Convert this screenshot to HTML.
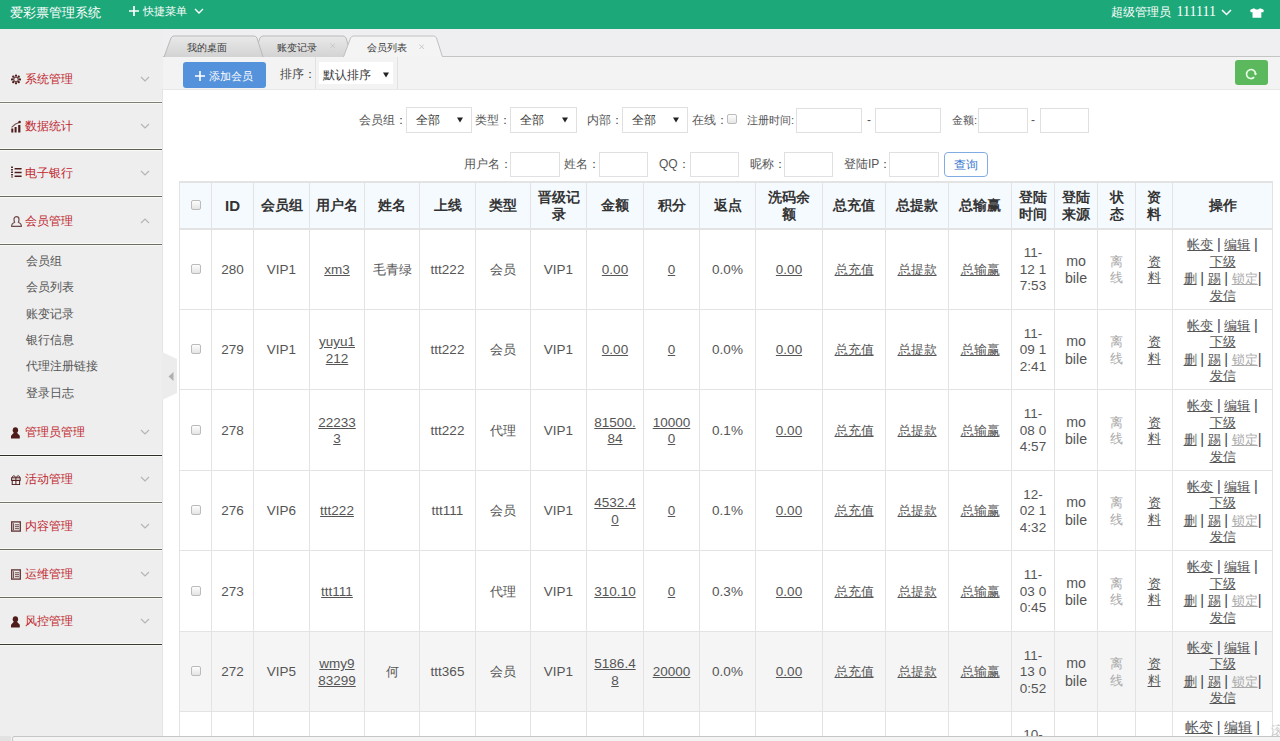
<!DOCTYPE html><html><head><meta charset="utf-8"><style>
*{margin:0;padding:0;box-sizing:border-box}
html,body{width:1280px;height:741px;overflow:hidden;background:#fff;font-family:"Liberation Sans",sans-serif;color:#555;font-size:12px}
.a{position:absolute;white-space:nowrap}
#hd{position:absolute;left:0;top:0;width:1280px;height:29px;background:#1da87a;color:#fff}
#side{position:absolute;left:0;top:29px;width:163px;height:712px;background:#eee}
.ln{position:absolute;left:0;width:163px;height:3px;border-top:1px solid #fbfbf6;border-bottom:1px solid #f9f9f4}
.mt{position:absolute;left:25px;font-size:11.6px;line-height:14px;color:#c0282e;white-space:nowrap}
.sm{position:absolute;left:26px;font-size:11.6px;line-height:14px;color:#555;white-space:nowrap}
#tabs{position:absolute;left:163px;top:29px;width:1117px;height:28px;background:#efeff1;border-bottom:1px solid #c8c8c8}
#tb{position:absolute;left:163px;top:57px;width:1117px;height:33px;background:#f5f5f5;border-bottom:1px solid #e6e6e6}
.inp{position:absolute;background:#fff;border:1px solid #e0e0e0}
.sel{position:absolute;background:#fff;border:1px solid #ddd;font-size:12px;color:#333}
.lb{position:absolute;font-size:12px;line-height:14px;color:#555;white-space:nowrap}
table{position:absolute;left:179px;top:182px;border-collapse:collapse;table-layout:fixed;font-size:13px;color:#555}
td,th{border:1px solid #e2e2e2;text-align:center;vertical-align:middle;padding:0;white-space:nowrap;overflow:hidden}
th{background:#f5fafe;color:#333;font-weight:bold;line-height:16.5px}
td{line-height:16.5px}
td u{text-decoration:underline}
.off{color:#aaa}
.cl{position:absolute;display:flex;align-items:center;justify-content:center;text-align:center;font-size:13.5px;line-height:16.5px;color:#555;white-space:nowrap;overflow:hidden}
.cl.th{color:#333;font-weight:bold}
.cb{display:inline-block;width:10px;height:10px;border:1px solid #bbb;border-radius:2px;background:linear-gradient(#fdfdfd,#e4e4e4)}
.cl u{text-decoration:underline}
.sp{color:#3a4250;font-size:14.5px}
</style></head><body>
<div id="hd">
<div class="a" style="left:10px;top:3.5px;font-size:13.3px;line-height:17px">爱彩票管理系统</div>
<svg class="a" width="10" height="10" viewBox="0 0 10 10" style="left:128.6px;top:6.2px"><path d="M5 0V10M0 5H10" stroke="#fff" stroke-width="1.7"/></svg>
<div class="a" style="left:143px;top:4.5px;font-size:11.3px;line-height:13px">快捷菜单</div>
<svg class="a" width="11" height="7" viewBox="0 0 11 7" style="left:193.5px;top:8.3px"><path d="M1 1L5 5L9 1" stroke="#fff" stroke-width="1.4" fill="none"/></svg>
<div class="a" style="left:1110.5px;top:4.5px;font-size:11.5px;line-height:14px">超级管理员</div>
<div class="a" style="left:1176.5px;top:3px;font-family:'Liberation Serif',serif;font-size:14px;line-height:17px">111111</div>
<svg class="a" width="11" height="7" viewBox="0 0 11 7" style="left:1221px;top:9px"><path d="M1 1L5.5 5.5L10 1" stroke="#fff" stroke-width="1.5" fill="none"/></svg>
<svg class="a" width="14" height="10" viewBox="0 0 14 10" style="left:1249.9px;top:7.6px"><path d="M4 0.3C5 1.2 6 1.5 7 1.5C8 1.5 9 1.2 10 0.3L13.2 1.6C13.9 2 13.9 3.2 13.3 4.2H11.3V9.8H2.5V4.2H0.7C0.1 3.2 0.1 2 0.8 1.6Z" fill="#fff"/></svg>
</div>
<div id="side"></div>
<div class="ln" style="top:101px;background:#7f7f7a"></div>
<svg class="a" width="10" height="11" viewBox="0 0 10 10.5" style="left:10.7px;top:74.1px"><circle cx="8.90" cy="5.20" r="1.15" fill="#4f1c1c"/><circle cx="7.76" cy="7.96" r="1.15" fill="#4f1c1c"/><circle cx="5.00" cy="9.10" r="1.15" fill="#4f1c1c"/><circle cx="2.24" cy="7.96" r="1.15" fill="#4f1c1c"/><circle cx="1.10" cy="5.20" r="1.15" fill="#4f1c1c"/><circle cx="2.24" cy="2.44" r="1.15" fill="#4f1c1c"/><circle cx="5.00" cy="1.30" r="1.15" fill="#4f1c1c"/><circle cx="7.76" cy="2.44" r="1.15" fill="#4f1c1c"/><circle cx="5" cy="5.2" r="2.3" fill="none" stroke="#4f1c1c" stroke-width="1.3" opacity="0.8"/></svg>
<div class="mt" style="top:71.5px">系统管理</div>
<svg class="a" width="10" height="6" viewBox="0 0 10 6" style="left:140px;top:76.0px"><path d="M1 1L5 5L9 1" stroke="#b5b5b5" stroke-width="1.2" fill="none"/></svg>
<div class="ln" style="top:148px;background:#5f5f5a"></div>
<svg class="a" width="10" height="13" viewBox="0 0 10 12.5" style="left:11.1px;top:120.3px"><path d="M0.3 12.3V8.2H2.3V12.3ZM3.6 12.3V6.8H5.6V12.3ZM7.2 12.3V4.8H9.4V12.3Z" fill="#4f1c1c"/><path d="M0.6 7.2L4.5 3.8L8.2 2.2" stroke="#4f1c1c" stroke-width="1.1" fill="none" opacity="0.75"/><circle cx="8.6" cy="1.7" r="1.3" fill="#4f1c1c"/></svg>
<div class="mt" style="top:118.5px">数据统计</div>
<svg class="a" width="10" height="6" viewBox="0 0 10 6" style="left:140px;top:123.0px"><path d="M1 1L5 5L9 1" stroke="#b5b5b5" stroke-width="1.2" fill="none"/></svg>
<div class="ln" style="top:195px;background:#6a6a65"></div>
<svg class="a" width="11" height="12" viewBox="0 0 11 12" style="left:10.6px;top:166.4px"><path d="M1 0.5V11.5" stroke="#4f1c1c" stroke-width="1.8" stroke-dasharray="1.6 0.9"/><path d="M3.6 2.8H10.6M3.6 6.5H10.6M3.6 10.2H10.6" stroke="#4f1c1c" stroke-width="1.5"/></svg>
<div class="mt" style="top:165.5px">电子银行</div>
<svg class="a" width="10" height="6" viewBox="0 0 10 6" style="left:140px;top:170.0px"><path d="M1 1L5 5L9 1" stroke="#b5b5b5" stroke-width="1.2" fill="none"/></svg>
<div class="ln" style="top:243px;background:#6e6e68"></div>
<svg class="a" width="11" height="11" viewBox="0 0 11 11" style="left:10.6px;top:215.9px"><path d="M3.6 6.2C3 4.8 3 3.6 3 3.2A2.5 2.5 0 0 1 8 3.2C8 3.6 8 4.8 7.4 6.2C9 7 10.3 7.8 10.3 9.2V10.3H0.7V9.2C0.7 7.8 2 7 3.6 6.2Z" fill="none" stroke="#6e4a4a" stroke-width="1.2"/></svg>
<div class="mt" style="top:213.5px">会员管理</div>
<svg class="a" width="10" height="6" viewBox="0 0 10 6" style="left:140px;top:218.0px"><path d="M1 5L5 1L9 5" stroke="#b5b5b5" stroke-width="1.2" fill="none"/></svg>
<div class="ln" style="top:454px;background:#2c2c2a"></div>
<svg class="a" width="9" height="12" viewBox="0 0 9 11.5" style="left:11.2px;top:427.1px"><ellipse cx="4.4" cy="3.1" rx="2.7" ry="3" fill="#4f1c1c"/><path d="M2.6 5.8H6.2L8.8 8.6V11.3H0V8.6Z" fill="#4f1c1c"/></svg>
<div class="mt" style="top:424.5px">管理员管理</div>
<svg class="a" width="10" height="6" viewBox="0 0 10 6" style="left:140px;top:429.0px"><path d="M1 1L5 5L9 1" stroke="#b5b5b5" stroke-width="1.2" fill="none"/></svg>
<div class="ln" style="top:501px;background:#777772"></div>
<svg class="a" width="10" height="10" viewBox="0 0 10 10" style="left:11.2px;top:474.9px"><path d="M1.5 2.6C1 0.5 3.5 0.2 5 2.4C6.5 0.2 9 0.5 8.5 2.6" fill="none" stroke="#4f1c1c" stroke-width="1"/><rect x="0.6" y="2.8" width="8.6" height="2.6" fill="none" stroke="#4f1c1c" stroke-width="1"/><rect x="1.2" y="5.4" width="7.4" height="4.2" fill="none" stroke="#4f1c1c" stroke-width="1"/><path d="M4.9 2.8V9.6" stroke="#4f1c1c" stroke-width="1"/></svg>
<div class="mt" style="top:471.5px">活动管理</div>
<svg class="a" width="10" height="6" viewBox="0 0 10 6" style="left:140px;top:476.0px"><path d="M1 1L5 5L9 1" stroke="#b5b5b5" stroke-width="1.2" fill="none"/></svg>
<div class="ln" style="top:548px;background:#6a6a65"></div>
<svg class="a" width="10" height="11" viewBox="0 0 10 10.6" style="left:10.9px;top:521.1px"><rect x="0.7" y="0.7" width="8.6" height="9.2" fill="none" stroke="#4f1c1c" stroke-width="1.4" opacity="0.85"/><path d="M2.6 2V9M4 3.6H8M4 5.5H8M4 7.5H8" stroke="#4f1c1c" stroke-width="1" opacity="0.8"/></svg>
<div class="mt" style="top:518.5px">内容管理</div>
<svg class="a" width="10" height="6" viewBox="0 0 10 6" style="left:140px;top:523.0px"><path d="M1 1L5 5L9 1" stroke="#b5b5b5" stroke-width="1.2" fill="none"/></svg>
<div class="ln" style="top:596px;background:#6a6a65"></div>
<svg class="a" width="10" height="11" viewBox="0 0 10 10.6" style="left:10.9px;top:569.1px"><rect x="0.7" y="0.7" width="8.6" height="9.2" fill="none" stroke="#4f1c1c" stroke-width="1.4" opacity="0.85"/><path d="M2.6 2V9M4 3.6H8M4 5.5H8M4 7.5H8" stroke="#4f1c1c" stroke-width="1" opacity="0.8"/></svg>
<div class="mt" style="top:566.5px">运维管理</div>
<svg class="a" width="10" height="6" viewBox="0 0 10 6" style="left:140px;top:571.0px"><path d="M1 1L5 5L9 1" stroke="#b5b5b5" stroke-width="1.2" fill="none"/></svg>
<div class="ln" style="top:643px;background:#3a3a35"></div>
<svg class="a" width="9" height="12" viewBox="0 0 9 11.5" style="left:11.2px;top:616.1px"><ellipse cx="4.4" cy="3.1" rx="2.7" ry="3" fill="#4f1c1c"/><path d="M2.6 5.8H6.2L8.8 8.6V11.3H0V8.6Z" fill="#4f1c1c"/></svg>
<div class="mt" style="top:613.5px">风控管理</div>
<svg class="a" width="10" height="6" viewBox="0 0 10 6" style="left:140px;top:618.0px"><path d="M1 1L5 5L9 1" stroke="#b5b5b5" stroke-width="1.2" fill="none"/></svg>
<div class="sm" style="top:253.8px">会员组</div>
<div class="sm" style="top:280.2px">会员列表</div>
<div class="sm" style="top:306.6px">账变记录</div>
<div class="sm" style="top:333.0px">银行信息</div>
<div class="sm" style="top:359.4px">代理注册链接</div>
<div class="sm" style="top:385.8px">登录日志</div>
<div class="a" style="left:163px;top:29px;width:1117px;height:28px;background:#efeff1"></div>
<div class="a" style="left:163px;top:56px;width:1117px;height:1px;background:#c4c4c4"></div>
<svg class="a" width="300" height="30" viewBox="163 29 300 30" style="left:163px;top:29px">
<defs><linearGradient id="tg" x1="0" y1="0" x2="0" y2="1"><stop offset="0" stop-color="#e9e9e9"/><stop offset="1" stop-color="#d3d3d3"/></linearGradient></defs>
<path d="M253 28 L260 9 Q261 7 263 7 L343 7 Q345 7 346 9 L352 28" transform="translate(0,29)" fill="url(#tg)" stroke="#b9b9b9" stroke-width="1"/>
<path d="M164 28 L171 9 Q172 7 174 7 L254 7 Q256 7 257 9 L263 28" transform="translate(0,29)" fill="url(#tg)" stroke="#b9b9b9" stroke-width="1"/>
<path d="M343.5 28 L350.5 9 Q351.5 7 353.5 7 L433.5 7 Q435.5 7 436.5 9 L442.5 28" transform="translate(0,29)" fill="#f4f4f4" stroke="#c0c0c0" stroke-width="1"/>
<rect x="344" y="56" width="98" height="3" fill="#f4f4f4"/>
</svg>
<div class="a" style="left:187px;top:40.5px;font-size:10.2px;line-height:13px;color:#3a3a3a">我的桌面</div>
<div class="a" style="left:277px;top:40.5px;font-size:10.2px;line-height:13px;color:#3a3a3a">账变记录</div>
<div class="a" style="left:367px;top:40.5px;font-size:10.2px;line-height:13px;color:#3a3a3a">会员列表</div>
<svg class="a" width="5.5" height="5.5" viewBox="0 0 7 7" style="left:329.5px;top:43.2px"><path d="M0.5 0.5L6.5 6.5M6.5 0.5L0.5 6.5" stroke="#c4c4c4" stroke-width="1.1"/></svg>
<svg class="a" width="5.5" height="5.5" viewBox="0 0 7 7" style="left:418.8px;top:43.6px"><path d="M0.5 0.5L6.5 6.5M6.5 0.5L0.5 6.5" stroke="#c4c4c4" stroke-width="1.1"/></svg>
<div class="a" style="left:163px;top:57px;width:1117px;height:33px;background:#f3f3f3;border-bottom:1px solid #e8e8e8"></div>
<div class="a" style="left:183px;top:62px;width:83px;height:26px;background:#5592dc;border-radius:3px"></div>
<svg class="a" width="10" height="10" viewBox="0 0 10 10" style="left:195px;top:71.2px"><path d="M5 0V10M0 5H10" stroke="#fff" stroke-width="1.6"/></svg>
<div class="a" style="left:209px;top:68.5px;font-size:11.4px;line-height:14px;color:#fff">添加会员</div>
<div class="a" style="left:280px;top:67px;font-size:12px;line-height:14px;color:#444">排序：</div>
<div class="a" style="left:315px;top:57px;width:83px;height:32px;border-left:1px solid #e2e2e2;border-right:1px solid #e2e2e2"></div>
<div class="a" style="left:319px;top:62px;width:74px;height:22px;background:#fff"></div>
<div class="a" style="left:323px;top:68px;font-size:11.6px;line-height:14px;color:#333">默认排序</div>
<svg class="a" width="6" height="6" viewBox="0 0 6 6" style="left:383px;top:72px"><path d="M0 0.5H6L3 5.5Z" fill="#222"/></svg>
<div class="a" style="left:1235px;top:60px;width:33px;height:25px;background:#5cb85c;border-radius:3px"></div>
<svg class="a" width="14" height="14" viewBox="0 0 14 14" style="left:1244.4px;top:66.7px"><path d="M11.5 7A4.5 4.5 0 1 0 10.2 10.2" fill="none" stroke="#e8ffe8" stroke-width="1.7"/><path d="M9.7 6.4H13.3L11.5 8.6Z" fill="#e8ffe8"/></svg>
<div class="lb" style="left:359px;top:113px;color:#555">会员组：</div>
<div class="inp" style="left:406px;top:107px;width:66px;height:26px"></div>
<div class="lb" style="left:416px;top:113.0px;color:#333">全部</div>
<svg class="a" width="6" height="6" viewBox="0 0 6 6" style="left:457px;top:116.5px"><path d="M0 0.5H6L3 5.5Z" fill="#222"/></svg>
<div class="lb" style="left:475px;top:113px;color:#555">类型：</div>
<div class="inp" style="left:510px;top:107px;width:67px;height:26px"></div>
<div class="lb" style="left:520px;top:113.0px;color:#333">全部</div>
<svg class="a" width="6" height="6" viewBox="0 0 6 6" style="left:562px;top:116.5px"><path d="M0 0.5H6L3 5.5Z" fill="#222"/></svg>
<div class="lb" style="left:587px;top:113px;color:#555">内部：</div>
<div class="inp" style="left:622px;top:107px;width:66px;height:26px"></div>
<div class="lb" style="left:632px;top:113.0px;color:#333">全部</div>
<svg class="a" width="6" height="6" viewBox="0 0 6 6" style="left:673px;top:116.5px"><path d="M0 0.5H6L3 5.5Z" fill="#222"/></svg>
<div class="lb" style="left:692px;top:113px;color:#555">在线：</div>
<div class="a" style="left:727px;top:114px;width:10px;height:10px;border:1px solid #bbb;border-radius:2px;background:linear-gradient(#fdfdfd,#e6e6e6)"></div>
<div class="lb" style="left:747px;top:113px;font-size:11.3px">注册时间:</div>
<div class="inp" style="left:796px;top:108px;width:66px;height:25px"></div>
<div class="lb" style="left:867px;top:113px;color:#555">-</div>
<div class="inp" style="left:875px;top:108px;width:66px;height:25px"></div>
<div class="lb" style="left:952px;top:113px;font-size:11.3px">金额:</div>
<div class="inp" style="left:978px;top:108px;width:50px;height:25px"></div>
<div class="lb" style="left:1031px;top:113px;color:#555">-</div>
<div class="inp" style="left:1040px;top:108px;width:49px;height:25px"></div>
<div class="lb" style="left:464px;top:157px;color:#555">用户名：</div>
<div class="inp" style="left:510px;top:152px;width:50px;height:25px"></div>
<div class="lb" style="left:564px;top:157px;color:#555">姓名：</div>
<div class="inp" style="left:599px;top:152px;width:49px;height:25px"></div>
<div class="lb" style="left:659px;top:157px;color:#555">QQ：</div>
<div class="inp" style="left:690px;top:152px;width:49px;height:25px"></div>
<div class="lb" style="left:750px;top:157px;color:#555">昵称：</div>
<div class="inp" style="left:784px;top:152px;width:49px;height:25px"></div>
<div class="lb" style="left:844px;top:157px;color:#555">登陆IP：</div>
<div class="inp" style="left:889px;top:152px;width:50px;height:25px"></div>
<div class="a" style="left:943.5px;top:152px;width:44.5px;height:25px;border:1px solid #80ace3;border-radius:4px;background:#fff"></div>
<div class="lb" style="left:953.5px;top:158px;font-size:11.5px;color:#3a78d2">查询</div>
<div class="a" style="left:179px;top:181px;width:1093px;height:47px;background:#f5fafe"></div>
<div class="a" style="left:179px;top:631px;width:1093px;height:80px;background:#f5f5f5"></div>
<div class="a" style="left:179px;top:181px;width:1094px;height:2px;background:#e3e3e3"></div>
<div class="a" style="left:179px;top:228px;width:1094px;height:2px;background:#e3e3e3"></div>
<div class="a" style="left:179px;top:309px;width:1094px;height:1px;background:#e3e3e3"></div>
<div class="a" style="left:179px;top:389px;width:1094px;height:1px;background:#e3e3e3"></div>
<div class="a" style="left:179px;top:470px;width:1094px;height:1px;background:#e3e3e3"></div>
<div class="a" style="left:179px;top:550px;width:1094px;height:1px;background:#e3e3e3"></div>
<div class="a" style="left:179px;top:631px;width:1094px;height:1px;background:#e3e3e3"></div>
<div class="a" style="left:179px;top:711px;width:1094px;height:1px;background:#e3e3e3"></div>
<div class="a" style="left:179px;top:181px;width:1px;height:555px;background:#e3e3e3"></div>
<div class="a" style="left:211px;top:181px;width:1px;height:555px;background:#e3e3e3"></div>
<div class="a" style="left:253px;top:181px;width:1px;height:555px;background:#e3e3e3"></div>
<div class="a" style="left:309px;top:181px;width:1px;height:555px;background:#e3e3e3"></div>
<div class="a" style="left:364px;top:181px;width:1px;height:555px;background:#e3e3e3"></div>
<div class="a" style="left:419px;top:181px;width:1px;height:555px;background:#e3e3e3"></div>
<div class="a" style="left:475px;top:181px;width:1px;height:555px;background:#e3e3e3"></div>
<div class="a" style="left:530px;top:181px;width:1px;height:555px;background:#e3e3e3"></div>
<div class="a" style="left:586px;top:181px;width:1px;height:555px;background:#e3e3e3"></div>
<div class="a" style="left:643px;top:181px;width:1px;height:555px;background:#e3e3e3"></div>
<div class="a" style="left:699px;top:181px;width:1px;height:555px;background:#e3e3e3"></div>
<div class="a" style="left:755px;top:181px;width:1px;height:555px;background:#e3e3e3"></div>
<div class="a" style="left:822px;top:181px;width:1px;height:555px;background:#e3e3e3"></div>
<div class="a" style="left:885px;top:181px;width:1px;height:555px;background:#e3e3e3"></div>
<div class="a" style="left:948px;top:181px;width:1px;height:555px;background:#e3e3e3"></div>
<div class="a" style="left:1011px;top:181px;width:1px;height:555px;background:#e3e3e3"></div>
<div class="a" style="left:1054px;top:181px;width:1px;height:555px;background:#e3e3e3"></div>
<div class="a" style="left:1097px;top:181px;width:1px;height:555px;background:#e3e3e3"></div>
<div class="a" style="left:1135px;top:181px;width:1px;height:555px;background:#e3e3e3"></div>
<div class="a" style="left:1172px;top:181px;width:1px;height:555px;background:#e3e3e3"></div>
<div class="a" style="left:1272px;top:181px;width:1px;height:555px;background:#e3e3e3"></div>
<div class="cl th" style="left:180px;top:183px;width:31px;height:45px;padding-top:2px;"><div><span class="cb"></span></div></div>
<div class="cl th" style="left:212px;top:183px;width:41px;height:45px;padding-top:2px;"><div><span style="font-size:15px">ID</span></div></div>
<div class="cl th" style="left:254px;top:183px;width:55px;height:45px;padding-top:2px;"><div>会员组</div></div>
<div class="cl th" style="left:310px;top:183px;width:54px;height:45px;padding-top:2px;"><div>用户名</div></div>
<div class="cl th" style="left:365px;top:183px;width:54px;height:45px;padding-top:2px;"><div>姓名</div></div>
<div class="cl th" style="left:420px;top:183px;width:55px;height:45px;padding-top:2px;"><div>上线</div></div>
<div class="cl th" style="left:476px;top:183px;width:54px;height:45px;padding-top:2px;"><div>类型</div></div>
<div class="cl th" style="left:531px;top:183px;width:55px;height:45px;padding-top:2px;"><div>晋级记<br>录</div></div>
<div class="cl th" style="left:587px;top:183px;width:56px;height:45px;padding-top:2px;"><div>金额</div></div>
<div class="cl th" style="left:644px;top:183px;width:55px;height:45px;padding-top:2px;"><div>积分</div></div>
<div class="cl th" style="left:700px;top:183px;width:55px;height:45px;padding-top:2px;"><div>返点</div></div>
<div class="cl th" style="left:756px;top:183px;width:66px;height:45px;padding-top:2px;"><div>洗码余<br>额</div></div>
<div class="cl th" style="left:823px;top:183px;width:62px;height:45px;padding-top:2px;"><div>总充值</div></div>
<div class="cl th" style="left:886px;top:183px;width:62px;height:45px;padding-top:2px;"><div>总提款</div></div>
<div class="cl th" style="left:949px;top:183px;width:62px;height:45px;padding-top:2px;"><div>总输赢</div></div>
<div class="cl th" style="left:1012px;top:183px;width:42px;height:45px;padding-top:2px;"><div>登陆<br>时间</div></div>
<div class="cl th" style="left:1055px;top:183px;width:42px;height:45px;padding-top:2px;"><div>登陆<br>来源</div></div>
<div class="cl th" style="left:1098px;top:183px;width:37px;height:45px;padding-top:2px;"><div>状<br>态</div></div>
<div class="cl th" style="left:1136px;top:183px;width:36px;height:45px;padding-top:2px;"><div>资<br>料</div></div>
<div class="cl th" style="left:1173px;top:183px;width:99px;height:45px;padding-top:2px;"><div>操作</div></div>
<div class="cl " style="left:180px;top:229px;width:31px;height:80px;padding-top:2px;"><div><span class="cb"></span></div></div>
<div class="cl " style="left:212px;top:229px;width:41px;height:80px;padding-top:2px;"><div>280</div></div>
<div class="cl " style="left:254px;top:229px;width:55px;height:80px;padding-top:2px;"><div>VIP1</div></div>
<div class="cl " style="left:310px;top:229px;width:54px;height:80px;padding-top:2px;"><div><u>xm3</u></div></div>
<div class="cl " style="left:365px;top:229px;width:54px;height:80px;padding-top:2px;font-size:13px;"><div>毛青绿</div></div>
<div class="cl " style="left:420px;top:229px;width:55px;height:80px;padding-top:2px;"><div>ttt222</div></div>
<div class="cl " style="left:476px;top:229px;width:54px;height:80px;padding-top:2px;font-size:13px;"><div>会员</div></div>
<div class="cl " style="left:531px;top:229px;width:55px;height:80px;padding-top:2px;"><div>VIP1</div></div>
<div class="cl " style="left:587px;top:229px;width:56px;height:80px;padding-top:2px;"><div><u>0.00</u></div></div>
<div class="cl " style="left:644px;top:229px;width:55px;height:80px;padding-top:2px;"><div><u>0</u></div></div>
<div class="cl " style="left:700px;top:229px;width:55px;height:80px;padding-top:2px;"><div>0.0%</div></div>
<div class="cl " style="left:756px;top:229px;width:66px;height:80px;padding-top:2px;"><div><u>0.00</u></div></div>
<div class="cl " style="left:823px;top:229px;width:62px;height:80px;padding-top:2px;font-size:13px;"><div><u>总充值</u></div></div>
<div class="cl " style="left:886px;top:229px;width:62px;height:80px;padding-top:2px;font-size:13px;"><div><u>总提款</u></div></div>
<div class="cl " style="left:949px;top:229px;width:62px;height:80px;padding-top:2px;font-size:13px;"><div><u>总输赢</u></div></div>
<div class="cl " style="left:1012px;top:229px;width:42px;height:80px;padding-top:2px;"><div>11-<br>12 1<br>7:53</div></div>
<div class="cl " style="left:1055px;top:229px;width:42px;height:80px;padding-top:2px;"><div><span style="font-size:14.2px">mo<br>bile</span></div></div>
<div class="cl " style="left:1098px;top:229px;width:37px;height:80px;padding-top:2px;font-size:13px;"><div><span class="off">离<br>线</span></div></div>
<div class="cl " style="left:1136px;top:229px;width:36px;height:80px;padding-top:2px;font-size:13px;"><div><u>资</u><br><u>料</u></div></div>
<div class="cl " style="left:1173px;top:229px;width:99px;height:80px;padding-top:2px;font-size:13px;"><div><u>帐变</u> <span class="sp">|</span> <u>编辑</u> <span class="sp">|</span><br><u>下级</u><br><u>删</u> <span class="sp">|</span> <u>踢</u> <span class="sp">|</span> <u class="off">锁定</u><span class="sp">|</span><br><u>发信</u></div></div>
<div class="cl " style="left:180px;top:310px;width:31px;height:79px;padding-top:2px;"><div><span class="cb"></span></div></div>
<div class="cl " style="left:212px;top:310px;width:41px;height:79px;padding-top:2px;"><div>279</div></div>
<div class="cl " style="left:254px;top:310px;width:55px;height:79px;padding-top:2px;"><div>VIP1</div></div>
<div class="cl " style="left:310px;top:310px;width:54px;height:79px;padding-top:2px;"><div><u>yuyu1</u><br><u>212</u></div></div>
<div class="cl " style="left:365px;top:310px;width:54px;height:79px;padding-top:2px;"><div></div></div>
<div class="cl " style="left:420px;top:310px;width:55px;height:79px;padding-top:2px;"><div>ttt222</div></div>
<div class="cl " style="left:476px;top:310px;width:54px;height:79px;padding-top:2px;font-size:13px;"><div>会员</div></div>
<div class="cl " style="left:531px;top:310px;width:55px;height:79px;padding-top:2px;"><div>VIP1</div></div>
<div class="cl " style="left:587px;top:310px;width:56px;height:79px;padding-top:2px;"><div><u>0.00</u></div></div>
<div class="cl " style="left:644px;top:310px;width:55px;height:79px;padding-top:2px;"><div><u>0</u></div></div>
<div class="cl " style="left:700px;top:310px;width:55px;height:79px;padding-top:2px;"><div>0.0%</div></div>
<div class="cl " style="left:756px;top:310px;width:66px;height:79px;padding-top:2px;"><div><u>0.00</u></div></div>
<div class="cl " style="left:823px;top:310px;width:62px;height:79px;padding-top:2px;font-size:13px;"><div><u>总充值</u></div></div>
<div class="cl " style="left:886px;top:310px;width:62px;height:79px;padding-top:2px;font-size:13px;"><div><u>总提款</u></div></div>
<div class="cl " style="left:949px;top:310px;width:62px;height:79px;padding-top:2px;font-size:13px;"><div><u>总输赢</u></div></div>
<div class="cl " style="left:1012px;top:310px;width:42px;height:79px;padding-top:2px;"><div>11-<br>09 1<br>2:41</div></div>
<div class="cl " style="left:1055px;top:310px;width:42px;height:79px;padding-top:2px;"><div><span style="font-size:14.2px">mo<br>bile</span></div></div>
<div class="cl " style="left:1098px;top:310px;width:37px;height:79px;padding-top:2px;font-size:13px;"><div><span class="off">离<br>线</span></div></div>
<div class="cl " style="left:1136px;top:310px;width:36px;height:79px;padding-top:2px;font-size:13px;"><div><u>资</u><br><u>料</u></div></div>
<div class="cl " style="left:1173px;top:310px;width:99px;height:79px;padding-top:2px;font-size:13px;"><div><u>帐变</u> <span class="sp">|</span> <u>编辑</u> <span class="sp">|</span><br><u>下级</u><br><u>删</u> <span class="sp">|</span> <u>踢</u> <span class="sp">|</span> <u class="off">锁定</u><span class="sp">|</span><br><u>发信</u></div></div>
<div class="cl " style="left:180px;top:390px;width:31px;height:80px;padding-top:2px;"><div><span class="cb"></span></div></div>
<div class="cl " style="left:212px;top:390px;width:41px;height:80px;padding-top:2px;"><div>278</div></div>
<div class="cl " style="left:254px;top:390px;width:55px;height:80px;padding-top:2px;"><div></div></div>
<div class="cl " style="left:310px;top:390px;width:54px;height:80px;padding-top:2px;"><div><u>22233</u><br><u>3</u></div></div>
<div class="cl " style="left:365px;top:390px;width:54px;height:80px;padding-top:2px;"><div></div></div>
<div class="cl " style="left:420px;top:390px;width:55px;height:80px;padding-top:2px;"><div>ttt222</div></div>
<div class="cl " style="left:476px;top:390px;width:54px;height:80px;padding-top:2px;font-size:13px;"><div>代理</div></div>
<div class="cl " style="left:531px;top:390px;width:55px;height:80px;padding-top:2px;"><div>VIP1</div></div>
<div class="cl " style="left:587px;top:390px;width:56px;height:80px;padding-top:2px;"><div><u>81500.</u><br><u>84</u></div></div>
<div class="cl " style="left:644px;top:390px;width:55px;height:80px;padding-top:2px;"><div><u>10000</u><br><u>0</u></div></div>
<div class="cl " style="left:700px;top:390px;width:55px;height:80px;padding-top:2px;"><div>0.1%</div></div>
<div class="cl " style="left:756px;top:390px;width:66px;height:80px;padding-top:2px;"><div><u>0.00</u></div></div>
<div class="cl " style="left:823px;top:390px;width:62px;height:80px;padding-top:2px;font-size:13px;"><div><u>总充值</u></div></div>
<div class="cl " style="left:886px;top:390px;width:62px;height:80px;padding-top:2px;font-size:13px;"><div><u>总提款</u></div></div>
<div class="cl " style="left:949px;top:390px;width:62px;height:80px;padding-top:2px;font-size:13px;"><div><u>总输赢</u></div></div>
<div class="cl " style="left:1012px;top:390px;width:42px;height:80px;padding-top:2px;"><div>11-<br>08 0<br>4:57</div></div>
<div class="cl " style="left:1055px;top:390px;width:42px;height:80px;padding-top:2px;"><div><span style="font-size:14.2px">mo<br>bile</span></div></div>
<div class="cl " style="left:1098px;top:390px;width:37px;height:80px;padding-top:2px;font-size:13px;"><div><span class="off">离<br>线</span></div></div>
<div class="cl " style="left:1136px;top:390px;width:36px;height:80px;padding-top:2px;font-size:13px;"><div><u>资</u><br><u>料</u></div></div>
<div class="cl " style="left:1173px;top:390px;width:99px;height:80px;padding-top:2px;font-size:13px;"><div><u>帐变</u> <span class="sp">|</span> <u>编辑</u> <span class="sp">|</span><br><u>下级</u><br><u>删</u> <span class="sp">|</span> <u>踢</u> <span class="sp">|</span> <u class="off">锁定</u><span class="sp">|</span><br><u>发信</u></div></div>
<div class="cl " style="left:180px;top:471px;width:31px;height:79px;padding-top:2px;"><div><span class="cb"></span></div></div>
<div class="cl " style="left:212px;top:471px;width:41px;height:79px;padding-top:2px;"><div>276</div></div>
<div class="cl " style="left:254px;top:471px;width:55px;height:79px;padding-top:2px;"><div>VIP6</div></div>
<div class="cl " style="left:310px;top:471px;width:54px;height:79px;padding-top:2px;"><div><u>ttt222</u></div></div>
<div class="cl " style="left:365px;top:471px;width:54px;height:79px;padding-top:2px;"><div></div></div>
<div class="cl " style="left:420px;top:471px;width:55px;height:79px;padding-top:2px;"><div>ttt111</div></div>
<div class="cl " style="left:476px;top:471px;width:54px;height:79px;padding-top:2px;font-size:13px;"><div>会员</div></div>
<div class="cl " style="left:531px;top:471px;width:55px;height:79px;padding-top:2px;"><div>VIP1</div></div>
<div class="cl " style="left:587px;top:471px;width:56px;height:79px;padding-top:2px;"><div><u>4532.4</u><br><u>0</u></div></div>
<div class="cl " style="left:644px;top:471px;width:55px;height:79px;padding-top:2px;"><div><u>0</u></div></div>
<div class="cl " style="left:700px;top:471px;width:55px;height:79px;padding-top:2px;"><div>0.1%</div></div>
<div class="cl " style="left:756px;top:471px;width:66px;height:79px;padding-top:2px;"><div><u>0.00</u></div></div>
<div class="cl " style="left:823px;top:471px;width:62px;height:79px;padding-top:2px;font-size:13px;"><div><u>总充值</u></div></div>
<div class="cl " style="left:886px;top:471px;width:62px;height:79px;padding-top:2px;font-size:13px;"><div><u>总提款</u></div></div>
<div class="cl " style="left:949px;top:471px;width:62px;height:79px;padding-top:2px;font-size:13px;"><div><u>总输赢</u></div></div>
<div class="cl " style="left:1012px;top:471px;width:42px;height:79px;padding-top:2px;"><div>12-<br>02 1<br>4:32</div></div>
<div class="cl " style="left:1055px;top:471px;width:42px;height:79px;padding-top:2px;"><div><span style="font-size:14.2px">mo<br>bile</span></div></div>
<div class="cl " style="left:1098px;top:471px;width:37px;height:79px;padding-top:2px;font-size:13px;"><div><span class="off">离<br>线</span></div></div>
<div class="cl " style="left:1136px;top:471px;width:36px;height:79px;padding-top:2px;font-size:13px;"><div><u>资</u><br><u>料</u></div></div>
<div class="cl " style="left:1173px;top:471px;width:99px;height:79px;padding-top:2px;font-size:13px;"><div><u>帐变</u> <span class="sp">|</span> <u>编辑</u> <span class="sp">|</span><br><u>下级</u><br><u>删</u> <span class="sp">|</span> <u>踢</u> <span class="sp">|</span> <u class="off">锁定</u><span class="sp">|</span><br><u>发信</u></div></div>
<div class="cl " style="left:180px;top:551px;width:31px;height:80px;padding-top:2px;"><div><span class="cb"></span></div></div>
<div class="cl " style="left:212px;top:551px;width:41px;height:80px;padding-top:2px;"><div>273</div></div>
<div class="cl " style="left:254px;top:551px;width:55px;height:80px;padding-top:2px;"><div></div></div>
<div class="cl " style="left:310px;top:551px;width:54px;height:80px;padding-top:2px;"><div><u>ttt111</u></div></div>
<div class="cl " style="left:365px;top:551px;width:54px;height:80px;padding-top:2px;"><div></div></div>
<div class="cl " style="left:420px;top:551px;width:55px;height:80px;padding-top:2px;"><div></div></div>
<div class="cl " style="left:476px;top:551px;width:54px;height:80px;padding-top:2px;font-size:13px;"><div>代理</div></div>
<div class="cl " style="left:531px;top:551px;width:55px;height:80px;padding-top:2px;"><div>VIP1</div></div>
<div class="cl " style="left:587px;top:551px;width:56px;height:80px;padding-top:2px;"><div><u>310.10</u></div></div>
<div class="cl " style="left:644px;top:551px;width:55px;height:80px;padding-top:2px;"><div><u>0</u></div></div>
<div class="cl " style="left:700px;top:551px;width:55px;height:80px;padding-top:2px;"><div>0.3%</div></div>
<div class="cl " style="left:756px;top:551px;width:66px;height:80px;padding-top:2px;"><div><u>0.00</u></div></div>
<div class="cl " style="left:823px;top:551px;width:62px;height:80px;padding-top:2px;font-size:13px;"><div><u>总充值</u></div></div>
<div class="cl " style="left:886px;top:551px;width:62px;height:80px;padding-top:2px;font-size:13px;"><div><u>总提款</u></div></div>
<div class="cl " style="left:949px;top:551px;width:62px;height:80px;padding-top:2px;font-size:13px;"><div><u>总输赢</u></div></div>
<div class="cl " style="left:1012px;top:551px;width:42px;height:80px;padding-top:2px;"><div>11-<br>03 0<br>0:45</div></div>
<div class="cl " style="left:1055px;top:551px;width:42px;height:80px;padding-top:2px;"><div><span style="font-size:14.2px">mo<br>bile</span></div></div>
<div class="cl " style="left:1098px;top:551px;width:37px;height:80px;padding-top:2px;font-size:13px;"><div><span class="off">离<br>线</span></div></div>
<div class="cl " style="left:1136px;top:551px;width:36px;height:80px;padding-top:2px;font-size:13px;"><div><u>资</u><br><u>料</u></div></div>
<div class="cl " style="left:1173px;top:551px;width:99px;height:80px;padding-top:2px;font-size:13px;"><div><u>帐变</u> <span class="sp">|</span> <u>编辑</u> <span class="sp">|</span><br><u>下级</u><br><u>删</u> <span class="sp">|</span> <u>踢</u> <span class="sp">|</span> <u class="off">锁定</u><span class="sp">|</span><br><u>发信</u></div></div>
<div class="cl " style="left:180px;top:632px;width:31px;height:79px;padding-top:2px;"><div><span class="cb"></span></div></div>
<div class="cl " style="left:212px;top:632px;width:41px;height:79px;padding-top:2px;"><div>272</div></div>
<div class="cl " style="left:254px;top:632px;width:55px;height:79px;padding-top:2px;"><div>VIP5</div></div>
<div class="cl " style="left:310px;top:632px;width:54px;height:79px;padding-top:2px;"><div><u>wmy9</u><br><u>83299</u></div></div>
<div class="cl " style="left:365px;top:632px;width:54px;height:79px;padding-top:2px;font-size:13px;"><div>何</div></div>
<div class="cl " style="left:420px;top:632px;width:55px;height:79px;padding-top:2px;"><div>ttt365</div></div>
<div class="cl " style="left:476px;top:632px;width:54px;height:79px;padding-top:2px;font-size:13px;"><div>会员</div></div>
<div class="cl " style="left:531px;top:632px;width:55px;height:79px;padding-top:2px;"><div>VIP1</div></div>
<div class="cl " style="left:587px;top:632px;width:56px;height:79px;padding-top:2px;"><div><u>5186.4</u><br><u>8</u></div></div>
<div class="cl " style="left:644px;top:632px;width:55px;height:79px;padding-top:2px;"><div><u>20000</u></div></div>
<div class="cl " style="left:700px;top:632px;width:55px;height:79px;padding-top:2px;"><div>0.0%</div></div>
<div class="cl " style="left:756px;top:632px;width:66px;height:79px;padding-top:2px;"><div><u>0.00</u></div></div>
<div class="cl " style="left:823px;top:632px;width:62px;height:79px;padding-top:2px;font-size:13px;"><div><u>总充值</u></div></div>
<div class="cl " style="left:886px;top:632px;width:62px;height:79px;padding-top:2px;font-size:13px;"><div><u>总提款</u></div></div>
<div class="cl " style="left:949px;top:632px;width:62px;height:79px;padding-top:2px;font-size:13px;"><div><u>总输赢</u></div></div>
<div class="cl " style="left:1012px;top:632px;width:42px;height:79px;padding-top:2px;"><div>11-<br>13 0<br>0:52</div></div>
<div class="cl " style="left:1055px;top:632px;width:42px;height:79px;padding-top:2px;"><div><span style="font-size:14.2px">mo<br>bile</span></div></div>
<div class="cl " style="left:1098px;top:632px;width:37px;height:79px;padding-top:2px;font-size:13px;"><div><span class="off">离<br>线</span></div></div>
<div class="cl " style="left:1136px;top:632px;width:36px;height:79px;padding-top:2px;font-size:13px;"><div><u>资</u><br><u>料</u></div></div>
<div class="cl " style="left:1173px;top:632px;width:99px;height:79px;padding-top:2px;font-size:13px;"><div><u>帐变</u> <span class="sp">|</span> <u>编辑</u> <span class="sp">|</span><br><u>下级</u><br><u>删</u> <span class="sp">|</span> <u>踢</u> <span class="sp">|</span> <u class="off">锁定</u><span class="sp">|</span><br><u>发信</u></div></div>
<div class="cl" style="left:1012px;top:712px;width:42px;height:40px;align-items:flex-start;padding-top:15px"><div>10-</div></div>
<div class="cl" style="left:1173px;top:712px;width:99px;height:40px;align-items:flex-start;padding-top:7px"><div><u>帐变</u> <span class="sp">|</span> <u>编辑</u> <span class="sp">|</span></div></div>
<div class="a" style="left:0;top:736px;width:1280px;height:5px;background:#f1f1f1"></div>
<div class="a" style="left:0;top:736px;width:11px;height:5px;background:#e2e2e2"></div>
<div class="a" style="left:12px;top:736px;width:1270px;height:6px;background:#f3f3f3;border:1px solid #c6c6c6;border-radius:2px"></div>
<div class="a" style="left:162px;top:89px;width:1px;height:647px;background:#e4e4e4"></div>
<svg class="a" width="16" height="50" viewBox="0 0 16 50" style="left:162px;top:351px"><path d="M0 1L15 8V42L0 49Z" fill="#ececec"/><path d="M6.5 25.5L11.5 21V30Z" fill="#b0b0b0"/></svg>
<div class="a" style="left:1271px;top:723.5px;font-size:13px;line-height:14px;color:#c8c8c8;width:9px;height:12.5px;overflow:hidden">滚</div>
</body></html>
